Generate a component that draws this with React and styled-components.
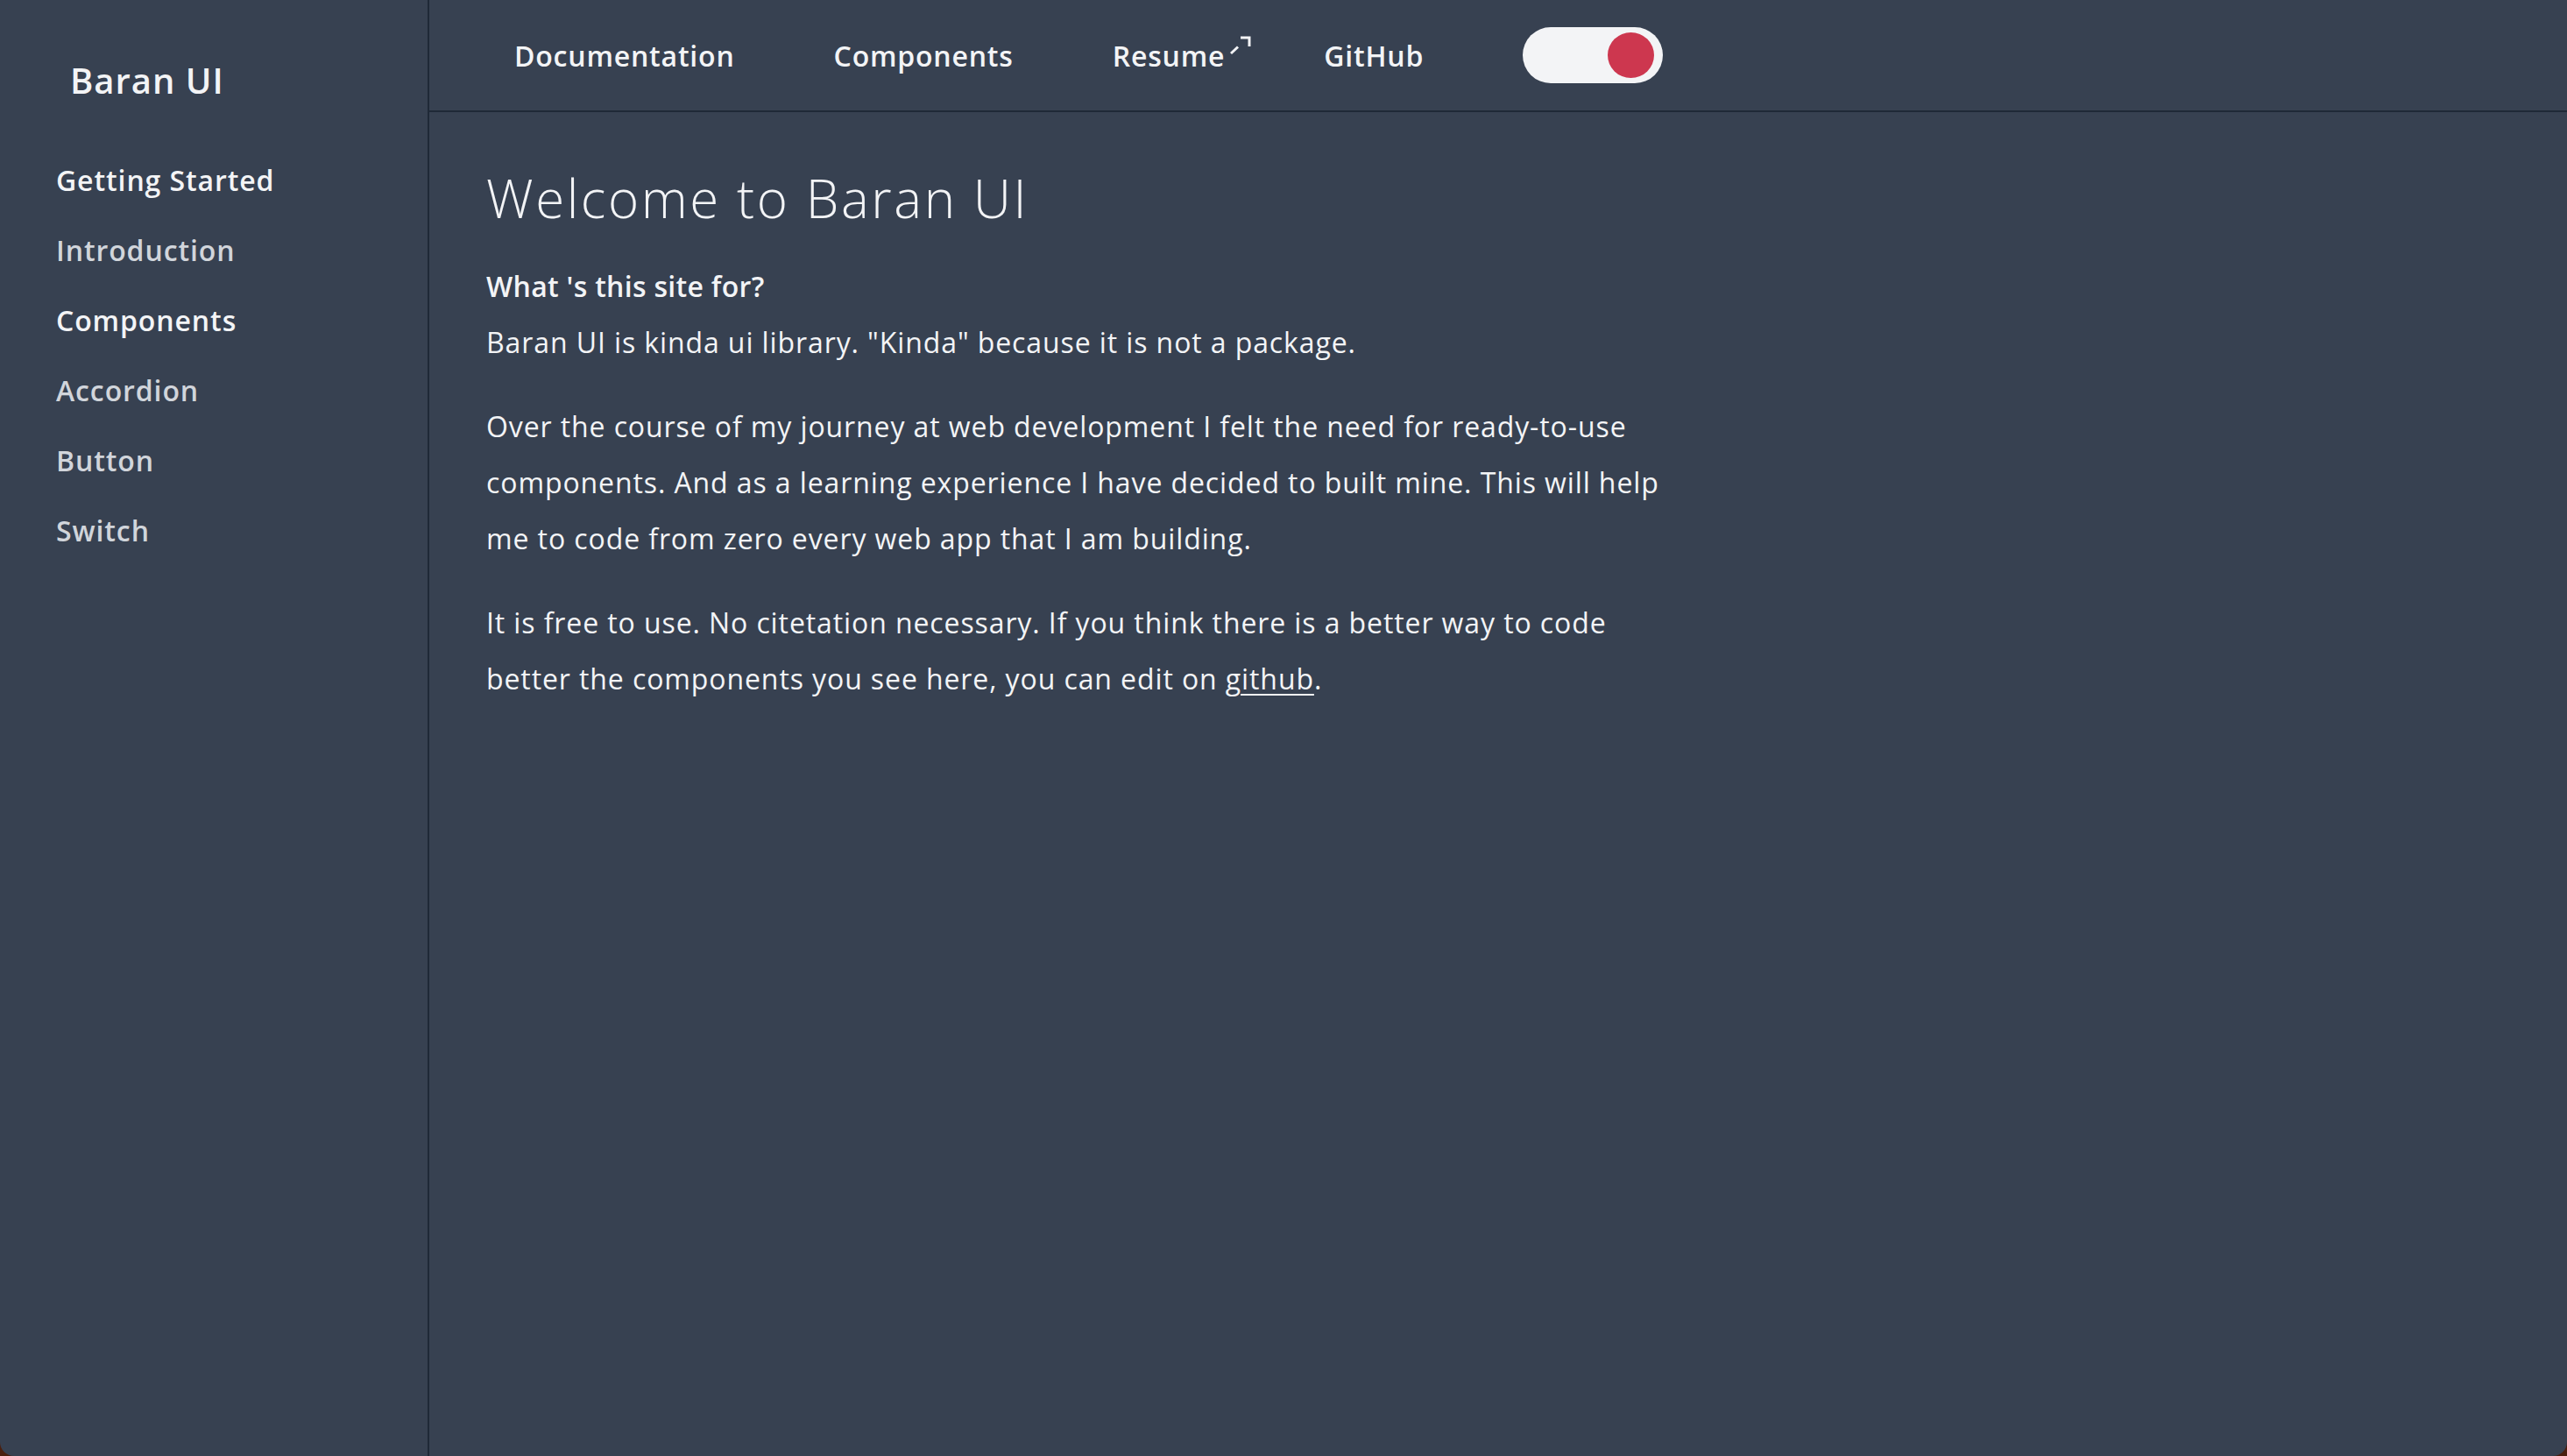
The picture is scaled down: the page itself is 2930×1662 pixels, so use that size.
import React from "react";
import styled, { createGlobalStyle } from "styled-components";

const GlobalStyle = createGlobalStyle`
  html, body {
    margin: 0;
    padding: 0;
    background: #4a1f0f;
  }
  body {
    font-family: "Open Sans", "Noto Sans", sans-serif;
    color: #f3f4f6;
  }
  * { box-sizing: border-box; }
`;

const Shell = styled.div`
  display: flex;
  height: 1662px;
  background: #374151;
  border-radius: 0 0 16px 16px;
  overflow: hidden;
`;

const Sidebar = styled.aside`
  width: 490px;
  flex-shrink: 0;
  border-right: 2px solid #1f2937;
  padding: 64px 0 0 64px;
  display: flex;
  flex-direction: column;
`;

const Logo = styled.div`
  font-size: 40px;
  font-weight: 600;
  letter-spacing: 1px;
  padding-left: 16px;
  margin-bottom: 47px;
  color: #f3f4f6;
`;

const SideList = styled.nav`
  display: flex;
  flex-direction: column;
`;

const SideItem = styled.a`
  font-size: 32px;
  font-weight: 600;
  line-height: 80px;
  letter-spacing: 0.9px;
  color: ${(p) => (p.$section ? "#f3f4f6" : "#d1d5db")};
  text-decoration: none;
`;

const Main = styled.div`
  flex: 1;
  display: flex;
  flex-direction: column;
`;

const Header = styled.header`
  height: 128px;
  border-bottom: 2px solid #1f2937;
  display: flex;
  align-items: center;
  padding-left: 97px;
  gap: 113px;
`;

const NavLink = styled.a`
  position: relative;
  font-size: 32px;
  font-weight: 600;
  letter-spacing: 0.8px;
  color: #f3f4f6;
  text-decoration: none;
`;

const ExternalMark = styled.svg`
  position: absolute;
  left: calc(100% + 4px);
  top: -1px;
  width: 27px;
  height: 22px;
`;

const Toggle = styled.button`
  width: 160px;
  height: 64px;
  border: none;
  border-radius: 32px;
  background: #f3f4f6;
  padding: 0 10px 0 0;
  display: flex;
  align-items: center;
  justify-content: flex-end;
  cursor: pointer;
`;

const Knob = styled.span`
  width: 53px;
  height: 52px;
  border-radius: 50%;
  background: #cd374f;
`;

const Content = styled.main`
  padding: 62px 0 0 65px;
  max-width: 1500px;
`;

const Title = styled.h1`
  margin: 0 0 33px;
  font-size: 60px;
  font-weight: 300;
  line-height: 72px;
  letter-spacing: 2.6px;
`;

const Subtitle = styled.h3`
  margin: 0;
  font-size: 32px;
  font-weight: 600;
  line-height: 64px;
  letter-spacing: 0.3px;
`;

const Para = styled.p`
  margin: 0 0 32px;
  font-size: 32px;
  font-weight: 400;
  line-height: 64px;
  letter-spacing: 0.9px;
  white-space: nowrap;
`;

const Link = styled.a`
  color: #f3f4f6;
  text-decoration: underline;
  text-decoration-thickness: 2px;
  text-underline-offset: 5px;
`;

export default function App() {
  return (
    <>
      <GlobalStyle />
      <Shell>
        <Sidebar>
          <Logo>Baran UI</Logo>
          <SideList>
            <SideItem $section>Getting Started</SideItem>
            <SideItem>Introduction</SideItem>
            <SideItem $section>Components</SideItem>
            <SideItem>Accordion</SideItem>
            <SideItem>Button</SideItem>
            <SideItem>Switch</SideItem>
          </SideList>
        </Sidebar>
        <Main>
          <Header>
            <NavLink>Documentation</NavLink>
            <NavLink>Components</NavLink>
            <NavLink>
              Resume
              <ExternalMark viewBox="0 0 27 22" fill="none" stroke="#f3f4f6" strokeWidth="3">
                <path d="M3 20 L11 12.5" />
                <path d="M14 2 H24 V12" />
              </ExternalMark>
            </NavLink>
            <NavLink>GitHub</NavLink>
            <Toggle aria-label="Toggle theme">
              <Knob />
            </Toggle>
          </Header>
          <Content>
            <Title>Welcome to Baran UI</Title>
            <Subtitle>What 's this site for?</Subtitle>
            <Para>Baran UI is kinda ui library. "Kinda" because it is not a package.</Para>
            <Para>
              Over the course of my journey at web development I felt the need for ready-to-use
              <br />
              components. And as a learning experience I have decided to built mine. This will help
              <br />
              me to code from zero every web app that I am building.
            </Para>
            <Para>
              It is free to use. No citetation necessary. If you think there is a better way to code
              <br />
              better the components you see here, you can edit on <Link>github</Link>.
            </Para>
          </Content>
        </Main>
      </Shell>
    </>
  );
}
